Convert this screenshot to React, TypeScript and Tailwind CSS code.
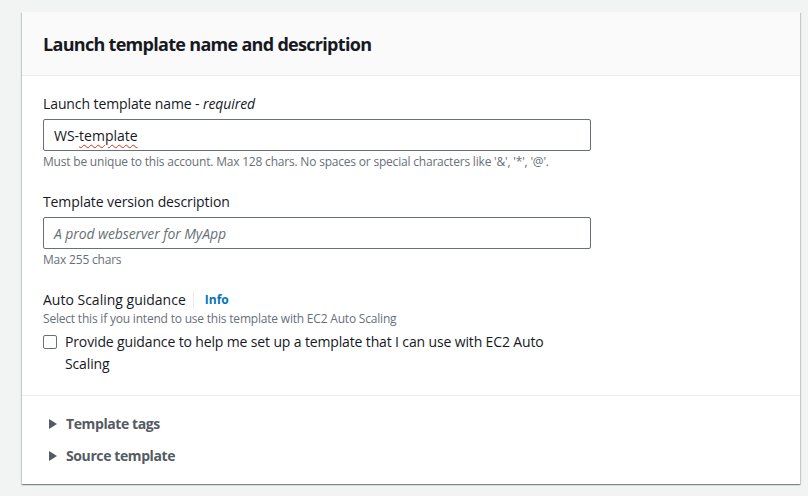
import React from "react";

function Field({
  label,
  hint,
  children,
}: {
  label: React.ReactNode;
  hint: string;
  children: React.ReactNode;
}) {
  return (
    <div className="flex flex-col">
      <label className="text-[14px] leading-[22px] tracking-[-0.1px] text-[#16191f]">{label}</label>
      <div className="mt-[4px] w-[548px]">{children}</div>
      <p className="mt-[3px] text-[12px] leading-[16px] tracking-[-0.2px] text-[#687078]">{hint}</p>
    </div>
  );
}

function Expander({ title }: { title: string }) {
  return (
    <div className="flex h-[22px] items-center gap-[9px] pl-[6px]">
      <svg width="8" height="10" viewBox="0 0 8 10" className="shrink-0">
        <path d="M0 0 L8 5 L0 10 Z" fill="#545b64" />
      </svg>
      <span className="text-[14px] font-bold leading-[22px] tracking-[-0.4px] text-[#545b64]">{title}</span>
    </div>
  );
}

export default function App() {
  return (
    <div
      className="min-h-[496px] w-[808px] bg-[#f2f3f3] pl-[22px] pr-[8px] pt-[12px]"
      style={{ fontFamily: '"Open Sans", "Noto Sans", Arial, sans-serif' }}
    >
      <div className="h-[472px] bg-white shadow-[0_1px_1px_0_rgba(0,28,36,0.3),1px_1px_1px_0_rgba(0,28,36,0.15),-1px_1px_1px_0_rgba(0,28,36,0.15)]">
        <div className="flex h-[64px] items-center border-b border-[#eaeded] bg-[#fafafa] px-[21px]">
          <h2 className="text-[18px] font-bold leading-[22px] tracking-[-0.7px] text-[#16191f]">
            Launch template name and description
          </h2>
        </div>

        <div className="flex flex-col border-b border-[#eaeded] px-[21px] pb-[20px] pt-[17px]">
          <Field
            label={
              <>
                Launch template name - <i>required</i>
              </>
            }
            hint="Must be unique to this account. Max 128 chars. No spaces or special characters like '&', '*', '@'."
          >
            <div className="flex h-[32px] items-center rounded-[2px] border border-[#687078] px-[10px] text-[14px] text-[#16191f]">
              WS-<span className="underline decoration-[#d13212] decoration-wavy decoration-[1px] underline-offset-[3px]">template</span>
            </div>
          </Field>

          <div className="mt-[21px]">
            <Field label="Template version description" hint="Max 255 chars">
              <div className="flex h-[32px] items-center rounded-[2px] border border-[#687078] px-[10px] text-[14px] italic tracking-[-0.1px] text-[#687078]">
                A prod webserver for MyApp
              </div>
            </Field>
          </div>

          <div className="mt-[21px] flex items-center">
            <span className="text-[14px] leading-[22px] text-[#16191f]">Auto Scaling guidance</span>
            <span className="ml-[7px] h-[18px] w-px bg-[#eaeded]" />
            <span className="ml-[11px] text-[12px] font-bold leading-[22px] text-[#0073bb]">Info</span>
          </div>
          <p className="text-[12px] leading-[16px] tracking-[-0.2px] text-[#687078]">
            Select this if you intend to use this template with EC2 Auto Scaling
          </p>
          <div className="mt-[4px] flex items-start gap-[8px]">
            <span className="mt-[4px] h-[14px] w-[14px] shrink-0 rounded-[2px] border border-[#687078] bg-white" />
            <span className="w-[490px] text-[14px] leading-[22px] tracking-[-0.14px] text-[#16191f]">
              Provide guidance to help me set up a template that I can use with EC2 Auto Scaling
            </span>
          </div>
        </div>

        <div className="flex flex-col gap-[10px] px-[21px] pb-[17px] pt-[17px]">
          <Expander title="Template tags" />
          <Expander title="Source template" />
        </div>
      </div>
    </div>
  );
}
